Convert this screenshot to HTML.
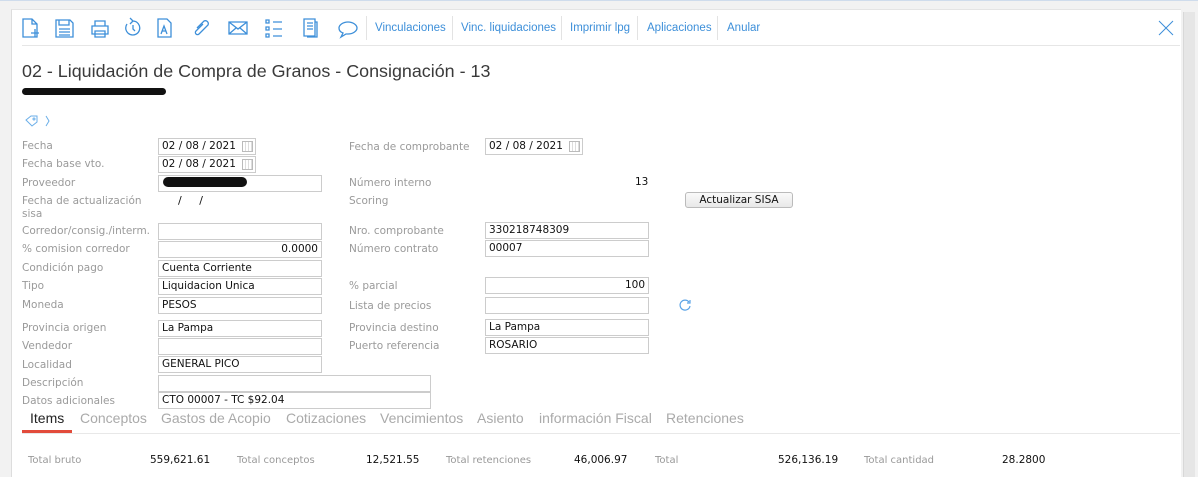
<!DOCTYPE html>
<html><head><meta charset="utf-8">
<style>
*{margin:0;padding:0;box-sizing:border-box}
body{width:1198px;height:486px;background:#fff;position:relative;overflow:hidden;font-family:"DejaVu Sans",sans-serif}
#bg{position:absolute;left:0;top:0;width:1198px;height:477px;background:#f2f2f2;border-top:1px solid #cfdcec}
#panel{position:absolute;left:11px;top:9px;width:1170px;height:468px;background:#fff;border-left:1px solid #ddd;border-top:1px solid #e4e4e4}
#sb{position:absolute;left:1183px;top:12px;width:12px;height:465px;background:#e6e6e6;border-left:1px solid #d8d8d8}
.a{position:absolute;white-space:nowrap}
.l{position:absolute;font-size:10.5px;color:#9a9a9a;line-height:12px;transform:translateY(-5px)}
.i{position:absolute;height:17px;border:1px solid #ccc;font-size:10.5px;color:#111;line-height:15px;padding:0 3px;transform:translateY(-7px);background:#fff}
.link{position:absolute;top:22px;font-family:"Liberation Sans",sans-serif;font-size:11.5px;color:#3d8fd9}
.sep{position:absolute;top:16px;width:1px;height:24px;background:#e3e3e3}
.tab{position:absolute;top:410px;font-family:"Liberation Sans",sans-serif;font-size:14px;color:#aaa}
.tl{position:absolute;top:455px;font-size:10px;color:#999}
.tv{position:absolute;top:454px;font-size:10.5px;color:#111}
.cal{position:absolute;right:2px;top:2px;width:11px;height:11px;border:1px solid #bbb;background:repeating-linear-gradient(90deg,#fff 0 2px,#ddd 2px 3px)}
</style></head><body>
<div id="bg"></div>
<div id="panel"></div>
<div id="sb"></div>

<svg class="a" style="left:20px;top:16px" width="345" height="24" viewBox="0 0 345 24" fill="none" stroke="#3d8fd9" stroke-width="1.3">
<path d="M3 3h9l5 5v13H3z M12 3v5h5 M11 17h8 M15 13v8"/>
<path d="M36 4h14l3 3v14H36z M39 4v5h10V4 M39 13h11 M39 16h11 M39 19h11"/>
<path d="M72 10h16v8H72z M75 10V5h10v5 M75 15h10v6H75z"/>
<path d="M107 8a7 7 0 1 0 6-3 M110 2l3 3-3 3 M113 9v4l2 2"/>
<path d="M138 3h9l4 4v14h-13z M141 18l3-8 3 8 M142 15h4"/>
<path d="M177 12l7-7a3 3 0 0 1 4 4l-9 9a2 2 0 0 1-3-3l7-7"/>
<path d="M209 6h18v12h-18z M209 6l9 7 9-7 M209 18l7-6 M227 18l-7-6"/>
<path d="M246 4h3v3h-3z M246 11h3v3h-3z M246 18h3v3h-3z M253 6h9 M253 13h9 M253 20h9"/>
<path d="M284 3h11v17h-11z M287 7h6 M287 10h6 M287 13h6 M295 6h2v15h-10"/>
<path d="M328 6c-5 0-9 3-9 6 0 2 1 4 4 5l-2 4 5-3c1 0 2 0 2 0 5 0 9-3 9-6s-4-6-9-6z"/>
</svg>
<div class="sep" style="left:366px"></div>
<div class="link" style="left:375px">Vinculaciones</div>
<div class="sep" style="left:452px"></div>
<div class="link" style="left:461px">Vinc. liquidaciones</div>
<div class="sep" style="left:561px"></div>
<div class="link" style="left:570px">Imprimir lpg</div>
<div class="sep" style="left:637px"></div>
<div class="link" style="left:647px">Aplicaciones</div>
<div class="sep" style="left:717px"></div>
<div class="link" style="left:727px">Anular</div>
<svg class="a" style="left:1158px;top:20px" width="16" height="16" stroke="#3d8fd9" stroke-width="1"><path d="M1 1l14 14M15 1L1 15"/></svg>
<div class="a" style="left:22px;top:45px;width:1158px;height:1px;background:#e6e6e6"></div>

<div class="a" style="left:22px;top:61px;font-family:'Liberation Sans',sans-serif;font-size:17.9px;color:#3a3a3a">02 - Liquidación de Compra de Granos - Consignación - 13</div>
<div class="a" style="left:22px;top:88px;width:144px;height:7px;background:#111;border-radius:4px"></div>
<svg class="a" style="left:24px;top:114px" width="28" height="14" fill="none" stroke="#6aaee8" stroke-width="1"><path d="M2 6l5-4h6v6l-5 4z"/><circle cx="10" cy="5" r="1"/><path d="M22 2l3 5-3 5"/></svg>

<div class="l" style="left:22px;top:145px">Fecha</div>
<div class="i" style="left:158px;top:145px;width:98px">02 / 08 / 2021<span class="cal"></span></div>
<div class="l" style="left:22px;top:163px">Fecha base vto.</div>
<div class="i" style="left:158px;top:163px;width:98px">02 / 08 / 2021<span class="cal"></span></div>
<div class="l" style="left:22px;top:182px">Proveedor</div>
<div class="i" style="left:158px;top:182px;width:164px"></div>
<div class="a" style="left:163px;top:177px;width:84px;height:10px;background:#111;border-radius:5px"></div>
<div class="l" style="left:22px;top:200px">Fecha de actualización</div>
<div class="l" style="left:22px;top:213px">sisa</div>
<div class="a" style="left:178px;top:194px;font-size:11px;color:#111">/&nbsp;&nbsp;&nbsp;&nbsp;&nbsp;/</div>
<div class="l" style="left:22px;top:230px">Corredor/consig./interm.</div>
<div class="i" style="left:158px;top:230px;width:164px"></div>
<div class="l" style="left:22px;top:248px">% comision corredor</div>
<div class="i" style="left:158px;top:248px;width:164px;text-align:right">0.0000</div>
<div class="l" style="left:22px;top:267px">Condición pago</div>
<div class="i" style="left:158px;top:267px;width:164px">Cuenta Corriente</div>
<div class="l" style="left:22px;top:285px">Tipo</div>
<div class="i" style="left:158px;top:285px;width:164px">Liquidacion Unica</div>
<div class="l" style="left:22px;top:304px">Moneda</div>
<div class="i" style="left:158px;top:304px;width:164px">PESOS</div>
<div class="l" style="left:22px;top:327px">Provincia origen</div>
<div class="i" style="left:158px;top:327px;width:164px">La Pampa</div>
<div class="l" style="left:22px;top:345px">Vendedor</div>
<div class="i" style="left:158px;top:345px;width:164px"></div>
<div class="l" style="left:22px;top:364px">Localidad</div>
<div class="i" style="left:158px;top:363px;width:164px">GENERAL PICO</div>
<div class="l" style="left:22px;top:382px">Descripción</div>
<div class="i" style="left:158px;top:382px;width:273px"></div>
<div class="l" style="left:22px;top:400px">Datos adicionales</div>
<div class="i" style="left:158px;top:399px;width:273px">CTO 00007 - TC $92.04</div>

<div class="l" style="left:349px;top:146px">Fecha de comprobante</div>
<div class="i" style="left:485px;top:145px;width:98px">02 / 08 / 2021<span class="cal"></span></div>
<div class="l" style="left:349px;top:182px">Número interno</div>
<div class="a" style="left:635px;top:176px;font-size:10.5px;color:#111">13</div>
<div class="l" style="left:349px;top:200px">Scoring</div>
<div class="a" style="left:685px;top:192px;width:108px;height:16px;border:1px solid #bbb;border-radius:3px;background:linear-gradient(#fafafa,#e8e8e8);font-size:10.5px;color:#111;text-align:center;line-height:14px">Actualizar SISA</div>
<div class="l" style="left:349px;top:230px">Nro. comprobante</div>
<div class="i" style="left:485px;top:229px;width:164px">330218748309</div>
<div class="l" style="left:349px;top:248px">Número contrato</div>
<div class="i" style="left:485px;top:247px;width:164px">00007</div>
<div class="l" style="left:349px;top:285px">% parcial</div>
<div class="i" style="left:485px;top:284px;width:164px;text-align:right">100</div>
<div class="l" style="left:349px;top:305px">Lista de precios</div>
<div class="i" style="left:485px;top:304px;width:164px"></div>
<svg class="a" style="left:678px;top:298px" width="14" height="14" fill="none" stroke="#5aa3e6" stroke-width="1.2"><path d="M11 4a5 5 0 1 0 1 4 M12 2v3h-3"/></svg>
<div class="l" style="left:349px;top:327px">Provincia destino</div>
<div class="i" style="left:485px;top:326px;width:164px">La Pampa</div>
<div class="l" style="left:349px;top:345px">Puerto referencia</div>
<div class="i" style="left:485px;top:344px;width:164px">ROSARIO</div>

<div class="tab" style="left:30px;color:#222">Items</div>
<div class="a" style="left:22px;top:430px;width:50px;height:3px;background:#e24b3b"></div>
<div class="tab" style="left:80px">Conceptos</div>
<div class="tab" style="left:161px">Gastos de Acopio</div>
<div class="tab" style="left:286px">Cotizaciones</div>
<div class="tab" style="left:380px">Vencimientos</div>
<div class="tab" style="left:477px">Asiento</div>
<div class="tab" style="left:539px">información Fiscal</div>
<div class="tab" style="left:666px">Retenciones</div>
<div class="a" style="left:22px;top:433px;width:1158px;height:1px;background:#e8e8e8"></div>

<div class="tl" style="left:28px">Total bruto</div>
<div class="tv" style="left:150px">559,621.61</div>
<div class="tl" style="left:237px">Total conceptos</div>
<div class="tv" style="left:366px">12,521.55</div>
<div class="tl" style="left:446px">Total retenciones</div>
<div class="tv" style="left:574px">46,006.97</div>
<div class="tl" style="left:655px">Total</div>
<div class="tv" style="left:778px">526,136.19</div>
<div class="tl" style="left:864px">Total cantidad</div>
<div class="tv" style="left:1002px">28.2800</div>
</body></html>
